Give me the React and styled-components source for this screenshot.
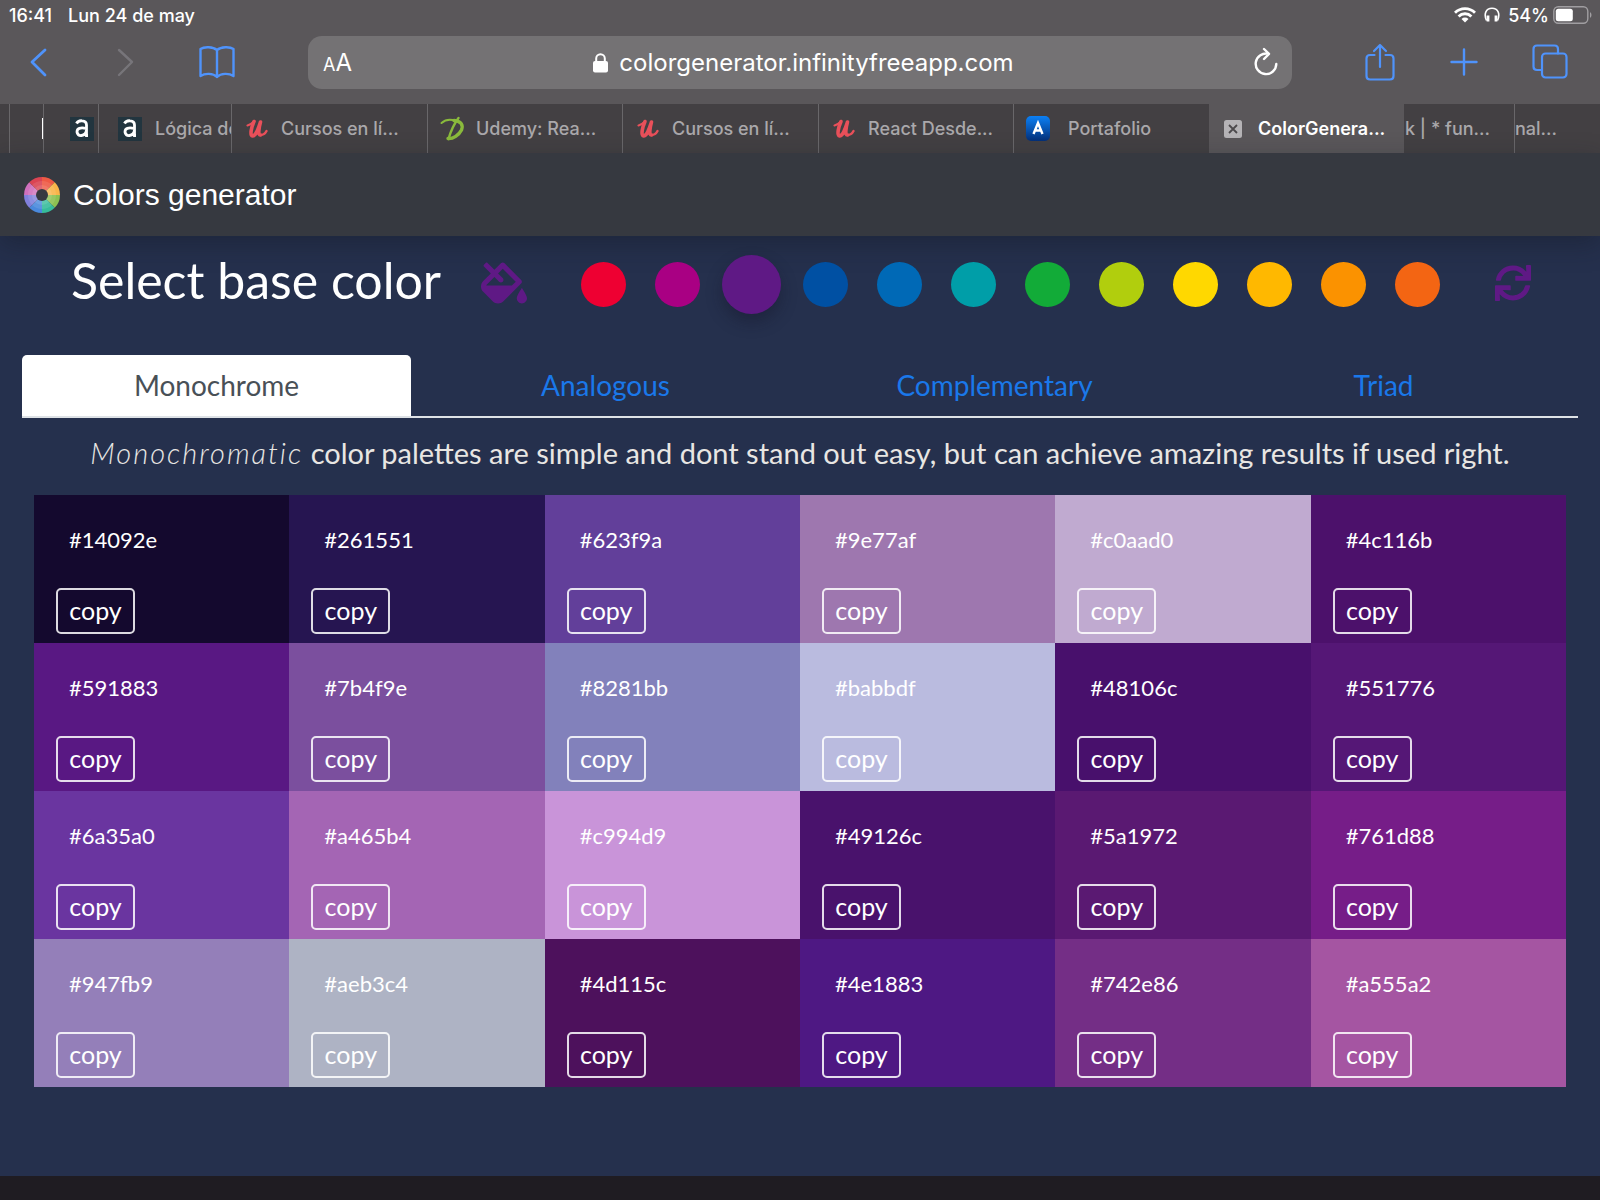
import React, { useState } from "react";
import styled, { createGlobalStyle, css } from "styled-components";
import { FaFillDrip, FaSync } from "react-icons/fa";

const GlobalStyle = createGlobalStyle`
  * { box-sizing: border-box; }
  body { margin: 0; background: #25304d; }
  button, input { font: inherit; }
`;

const uiFont = css`font-family: Inter, "Liberation Sans", sans-serif;`;
const pageFont = css`font-family: Lato, "Open Sans", sans-serif;`;

const Screen = styled.div`
  display: flex;
  flex-direction: column;
  min-height: 100vh;
`;

const Browser = styled.div`
  ${uiFont}
  background: #5a575a;
  color: #fff;
`;

const StatusBar = styled.div`
  display: flex;
  align-items: center;
  justify-content: space-between;
  height: 30px;
  padding: 0 8px 0 9px;
  font-size: 18px;
  font-weight: 500;
`;

const StatusGroup = styled.div`
  display: flex;
  align-items: center;
  gap: ${(p) => p.$gap}px;
`;

const Toolbar = styled.div`
  display: grid;
  grid-template-columns: 277px 1fr 277px;
  gap: 31px;
  height: 74px;
  padding-bottom: 10px;
  align-items: center;
`;

const ToolGroup = styled.div`
  display: flex;
  justify-content: space-between;
  align-items: center;
  padding: ${(p) => (p.$end ? "0 32px 0 42px" : "0 42px 0 22px")};
`;

const ToolButton = styled.button`
  display: flex;
  padding: 0;
  border: 0;
  background: none;
  color: ${(p) => (p.disabled ? "#77757a" : p.$light ? "#fff" : "#4f93fb")};
`;

const AddressBar = styled.div`
  display: flex;
  align-items: center;
  justify-content: space-between;
  height: 53px;
  padding: 0 13px 0 15px;
  border-radius: 14px;
  background: #747274;
`;

const TextSize = styled.button`
  display: flex;
  align-items: baseline;
  width: 31px;
  padding: 0;
  border: 0;
  background: none;
  color: #fff;
  font-size: 24px;
  small { font-size: 18px; }
`;

const Address = styled.a`
  display: flex;
  align-items: center;
  gap: 11px;
  color: #fff;
  font-size: 24px;
  text-decoration: none;
`;

const TabStrip = styled.nav`
  display: grid;
  grid-template-columns: 9fr 34fr 55fr 133fr 196fr 195fr 196fr 195fr 196fr 195fr 110fr 86fr;
  height: 49px;
  background: #434043;
`;

const BrowserTab = styled.a`
  display: flex;
  align-items: center;
  min-width: 0;
  overflow: hidden;
  gap: ${(p) => p.$gap || 13}px;
  padding-left: ${(p) => p.$pad || 0}px;
  border-left: 1px solid ${(p) => (p.$plain ? "transparent" : "#69676a")};
  background: ${(p) => (p.$active ? "#5a575a" : "transparent")};
  color: ${(p) => (p.$active ? "#fff" : "#aaa8ab")};
  font-size: 18px;
  font-weight: ${(p) => (p.$active ? 600 : 500)};
  white-space: nowrap;
  text-decoration: none;
  svg { flex: none; }
`;

const Caret = styled.span`
  width: 2px;
  height: 21px;
  background: #fff;
`;

const Header = styled.header`
  display: flex;
  align-items: center;
  gap: 13px;
  height: 83px;
  padding-left: 24px;
  background: #363940;
  box-shadow: 0 8px 24px rgba(20, 24, 36, 0.4);
  color: #fff;
  font-family: "Liberation Sans", Arial, sans-serif;
  font-size: 30px;
`;

const Main = styled.main`
  ${pageFont}
  flex: 1;
  padding: 0 22px 88px;
  color: #fff;
`;

const Picker = styled.section`
  display: flex;
  align-items: center;
  justify-content: space-between;
  height: 97px;
  margin-bottom: 22px;
  padding: 0 47px 0 49px;
  color: #5f1985;
`;

const PickerTitle = styled.h1`
  margin: 0;
  padding-bottom: 10px;
  color: #fff;
  font-size: 50px;
  font-weight: 400;
  line-height: 60px;
`;

const Swatches = styled.div`
  display: flex;
`;

const SwatchLabel = styled.label`
  display: grid;
  place-items: center;
  width: 74px;
  height: 60px;
`;

const Swatch = styled.input`
  appearance: none;
  width: 45px;
  height: 45px;
  margin: 0;
  border-radius: 50%;
  background: ${(p) => p.$color};
  &:checked {
    width: 59px;
    height: 59px;
    box-shadow: 0 8px 16px rgba(20, 20, 40, 0.4);
  }
`;

const IconButton = styled.button`
  display: flex;
  padding: 0 0 4px;
  border: 0;
  background: none;
  color: inherit;
`;

const SchemeTabs = styled.nav`
  display: grid;
  grid-template-columns: repeat(4, 1fr);
  border-bottom: 2px solid #dee2e6;
`;

const SchemeTab = styled.a`
  height: 61px;
  border-radius: 5px 5px 0 0;
  background: ${(p) => (p.$active ? "#fff" : "transparent")};
  color: ${(p) => (p.$active ? "#495057" : "#1a78ea")};
  font-size: 28px;
  line-height: 60px;
  text-align: center;
  text-decoration: none;
`;

const Description = styled.p`
  margin: 0;
  padding: 13px 0 21px;
  color: #e8e6e3;
  font-size: 29px;
  line-height: 43px;
  text-align: center;
  em {
    font-weight: 300;
    letter-spacing: 2px;
  }
`;

const Palette = styled.div`
  display: grid;
  grid-template-columns: repeat(6, 1fr);
  padding: 0 12px;
`;

const Cell = styled.div`
  display: flex;
  flex-direction: column;
  align-items: flex-start;
  height: 148px;
  padding: 29px 22px 9px;
  background: ${(p) => p.$color};
`;

const Hex = styled.span`
  flex: 1;
  padding-left: 13px;
  font-size: 22px;
  line-height: 32px;
`;

const CopyButton = styled.button`
  width: 79px;
  height: 46px;
  padding: 0 0 3px;
  border: 2px solid rgba(255, 255, 255, 0.85);
  border-radius: 5px;
  background: none;
  color: #fff;
  font-size: 25px;
  line-height: 32px;
`;

const BottomBar = styled.div`
  height: 24px;
  background: #1f1c22;
`;

const line = { fill: "none", stroke: "currentColor", strokeWidth: 2.4, strokeLinecap: "round", strokeLinejoin: "round" };

const BackIcon = () => (
  <svg width="34" height="34" viewBox="0 0 34 34" {...line} strokeWidth="2.8"><path d="M23 5 10 17 23 30" /></svg>
);
const ForwardIcon = () => (
  <svg width="34" height="34" viewBox="0 0 34 34" {...line}><path d="M8 5 21 17 8 30" /></svg>
);
const BookIcon = () => (
  <svg width="36" height="34" viewBox="0 0 36 34" {...line}>
    <path d="M18 5C14 1.500 5 1.500 1.500 4V31C6 28 14 28 18 32C22 28 30 28 34.500 31V4C31 1.500 22 1.500 18 5ZM18 5V32" />
  </svg>
);
const ShareIcon = () => (
  <svg width="30" height="38" viewBox="0 0 30 38" {...line} strokeWidth="2.200">
    <path d="M9.500 12H5Q1.500 12 1.500 15.500V33Q1.500 36.500 5 36.500H25Q28.500 36.500 28.500 33V15.500Q28.500 12 25 12H20.500M15 24V2M9 8 15 2 21 8" />
  </svg>
);
const PlusIcon = () => (
  <svg width="28" height="28" viewBox="0 0 28 28" {...line}><path d="M14 1.500V26.500M1.500 14H26.500" /></svg>
);
const TabsIcon = () => (
  <svg width="36" height="36" viewBox="0 0 36 36" {...line} strokeWidth="2.200">
    <path d="M9.500 26H5Q1.500 26 1.500 22.500V5Q1.500 1.500 5 1.500H22.500Q26 1.500 26 5V9.500" />
    <rect x="10" y="9.500" width="24.500" height="24" rx="3.500" />
  </svg>
);
const ReloadIcon = () => (
  <svg width="26" height="30" viewBox="0 0 26 30" {...line}>
    <path d="M15.500 6.800A10.300 10.300 0 1 0 23.300 17M11 2 16 6.800 11 12" />
  </svg>
);
const LockIcon = () => (
  <svg width="15" height="21" viewBox="0 0 15 21">
    <path d="M3.200 10V6.500a4.300 4.300 0 0 1 8.600 0V10" fill="none" stroke="currentColor" strokeWidth="2" />
    <rect y="9" width="15" height="11.500" rx="2" fill="currentColor" />
  </svg>
);
const WifiIcon = () => (
  <svg width="22" height="16" viewBox="0 0 22 16" fill="none" stroke="#fff" strokeWidth="2.800">
    <path d="M1 5.800A14.200 14.200 0 0 1 21 5.800M4.600 9.400A9 9 0 0 1 17.400 9.400" />
    <path d="M11 15.500 7.500 12A5 5 0 0 1 14.500 12Z" fill="#fff" stroke="none" />
  </svg>
);
const HeadphonesIcon = () => (
  <svg width="16" height="16" viewBox="0 0 16 16" fill="none" stroke="#fff">
    <path d="M2.500 13.500C-.5 7 2 1.200 8 1.200S16.500 7 13.500 13.500" strokeWidth="1.600" />
    <path d="M4 8.500V14.500M12 8.500V14.500" strokeWidth="2.800" />
  </svg>
);
const BatteryIcon = () => (
  <svg width="39" height="18" viewBox="0 0 39 18">
    <rect x=".8" y=".8" width="34" height="16.400" rx="4.500" fill="none" stroke="#a09ea1" strokeWidth="1.400" />
    <rect x="2.800" y="2.800" width="17" height="12.400" rx="2.500" fill="#fff" />
    <path d="M37 6v6q1.500-1 1.500-3T37 6Z" fill="#a09ea1" />
  </svg>
);
const AlgorithmIcon = () => (
  <svg width="24" height="24" viewBox="0 0 24 24">
    <rect width="24" height="24" fill="#22353f" />
    <path d="M6.500 6.500Q8 3.500 12 3.800Q16.500 4 16.500 8V18.500H18M16.500 11.500Q7 9.500 7 15Q7.500 19 11.500 18.500Q16 18 16.500 13" fill="none" stroke="#fff" strokeWidth="2.800" />
  </svg>
);
const UdemyIcon = () => (
  <svg width="22" height="20" viewBox="0 0 22 20" fill="none" stroke="#e9505a" strokeLinecap="round" strokeLinejoin="round">
    <path d="M1.500 6.500Q5 5.500 8 2.500" strokeWidth="2.200" />
    <path d="M8 2.500C5.500 8 3.500 16.500 6.500 17C10 17 12.500 9 14.500 3C12.500 10 12 16.500 14.500 16" strokeWidth="3.600" />
    <path d="M14.500 16Q18.500 16 20.500 12" strokeWidth="2.400" />
  </svg>
);
const DownloadIcon = () => (
  <svg width="25" height="26" viewBox="0 0 25 26" fill="none" stroke="#8aba3c" strokeLinecap="round">
    <path d="M1.500 7C6 3 12 3.500 16 5" strokeWidth="2" />
    <path d="M14 4.500C21 5 23.500 9 21.500 14C19 19 13 23 8 22.500" strokeWidth="3.400" />
    <path d="M18.500 2C14 8 10.500 16 8.500 23" strokeWidth="2.400" />
  </svg>
);
const PortfolioIcon = () => (
  <svg width="24" height="25" viewBox="0 0 24 25">
    <defs>
      <linearGradient id="portfolio" x1="0" y1="0" x2="0" y2="1">
        <stop offset="0" stopColor="#0b80f5" /><stop offset="1" stopColor="#042f78" />
      </linearGradient>
    </defs>
    <rect width="24" height="25" rx="5" fill="url(#portfolio)" />
    <path d="M7.500 18 12 7 16.500 18M9 14.500H15" fill="none" stroke="#fff" strokeWidth="2.400" />
  </svg>
);
const CloseIcon = () => (
  <svg width="18" height="18" viewBox="0 0 18 18">
    <rect width="18" height="18" rx="2.500" fill="#b5b3b6" />
    <path d="M5 5 13 13M13 5 5 13" stroke="#4c494c" strokeWidth="1.800" />
  </svg>
);

const wheel = ["#ee5a45", "#f9b54a", "#8cc152", "#37bc9b", "#4a89dc", "#8180dc", "#d070bd", "#da4453"];
const point = (r, a) => `${18 + r * Math.sin(a)} ${18 - r * Math.cos(a)}`;
const wedge = (i, r) => {
  const a = (i * Math.PI) / 4;
  const b = a + Math.PI / 4;
  return `M18 18L${point(r, a)}A${r} ${r} 0 0 1 ${point(r, b)}Z`;
};
const WheelLogo = () => (
  <svg width="36" height="36" viewBox="0 0 36 36">
    {wheel.map((c, i) => <path key={c} d={wedge(i, 18)} fill={c} />)}
    <circle cx="18" cy="18" r="14" fill="#fff" fillOpacity=".1" />
    <circle cx="18" cy="18" r="10" fill="#fff" fillOpacity=".1" />
    <circle cx="18" cy="18" r="6" fill="#363940" />
  </svg>
);

const bases = [
  ["Red", "#ee0032"], ["Magenta", "#a90083"], ["Purple", "#5f1985"], ["Navy", "#0050a3"],
  ["Blue", "#0069b6"], ["Teal", "#009ea8"], ["Green", "#12ab38"], ["Lime", "#b1ce0d"],
  ["Yellow", "#ffd800"], ["Amber", "#ffb800"], ["Orange", "#fb9200"], ["Vermilion", "#f36513"],
];

const palette = [
  "#14092e", "#261551", "#623f9a", "#9e77af", "#c0aad0", "#4c116b",
  "#591883", "#7b4f9e", "#8281bb", "#babbdf", "#48106c", "#551776",
  "#6a35a0", "#a465b4", "#c994d9", "#49126c", "#5a1972", "#761d88",
  "#947fb9", "#aeb3c4", "#4d115c", "#4e1883", "#742e86", "#a555a2",
];

const schemes = ["Monochrome", "Analogous", "Complementary", "Triad"];

export default function App() {
  const [base, setBase] = useState("Purple");
  return (
    <Screen>
      <GlobalStyle />
      <Browser>
        <StatusBar>
          <StatusGroup $gap={16}><span>16:41</span><span>Lun 24 de may</span></StatusGroup>
          <StatusGroup $gap={8}>
            <WifiIcon /><HeadphonesIcon />
            <StatusGroup $gap={4}><span>54%</span><BatteryIcon /></StatusGroup>
          </StatusGroup>
        </StatusBar>
        <Toolbar>
          <ToolGroup>
            <ToolButton aria-label="Back"><BackIcon /></ToolButton>
            <ToolButton aria-label="Forward" disabled><ForwardIcon /></ToolButton>
            <ToolButton aria-label="Bookmarks"><BookIcon /></ToolButton>
          </ToolGroup>
          <AddressBar>
            <TextSize aria-label="Text size"><small>A</small>A</TextSize>
            <Address href="#"><LockIcon />colorgenerator.infinityfreeapp.com</Address>
            <ToolButton aria-label="Reload" $light><ReloadIcon /></ToolButton>
          </AddressBar>
          <ToolGroup $end>
            <ToolButton aria-label="Share"><ShareIcon /></ToolButton>
            <ToolButton aria-label="New tab"><PlusIcon /></ToolButton>
            <ToolButton aria-label="All tabs"><TabsIcon /></ToolButton>
          </ToolGroup>
        </Toolbar>
        <TabStrip>
          <BrowserTab href="#" $plain aria-label="Tab" />
          <BrowserTab href="#" $pad={32} aria-label="Tab"><Caret /></BrowserTab>
          <BrowserTab href="#" $pad={26} aria-label="Tab"><AlgorithmIcon /></BrowserTab>
          <BrowserTab href="#" $pad={19}><AlgorithmIcon />Lógica de</BrowserTab>
          <BrowserTab href="#" $pad={14}><UdemyIcon />Cursos en lí...</BrowserTab>
          <BrowserTab href="#" $pad={12} $gap={11}><DownloadIcon />Udemy: Rea...</BrowserTab>
          <BrowserTab href="#" $pad={14}><UdemyIcon />Cursos en lí...</BrowserTab>
          <BrowserTab href="#" $pad={14}><UdemyIcon />React Desde...</BrowserTab>
          <BrowserTab href="#" $pad={12} $gap={18}><PortfolioIcon />Portafolio</BrowserTab>
          <BrowserTab href="#" $pad={14} $gap={16} $active $plain><CloseIcon />ColorGenera...</BrowserTab>
          <BrowserTab href="#" $plain>k | * fun...</BrowserTab>
          <BrowserTab href="#">nal...</BrowserTab>
        </TabStrip>
      </Browser>
      <Header><WheelLogo />Colors generator</Header>
      <Main>
        <Picker>
          <PickerTitle>Select base color</PickerTitle>
          <IconButton aria-label="Fill"><FaFillDrip size={46} /></IconButton>
          <Swatches>
            {bases.map(([name, color]) => (
              <SwatchLabel key={name}>
                <Swatch type="radio" name="base" aria-label={name} $color={color} checked={base === name} onChange={() => setBase(name)} />
              </SwatchLabel>
            ))}
          </Swatches>
          <IconButton aria-label="Refresh"><FaSync size={36} /></IconButton>
        </Picker>
        <SchemeTabs>
          {schemes.map((s, i) => <SchemeTab key={s} href="#" $active={i === 0}>{s}</SchemeTab>)}
        </SchemeTabs>
        <Description>
          <em>Monochromatic</em> color palettes are simple and dont stand out easy, but can achieve amazing results if used right.
        </Description>
        <Palette>
          {palette.map((c) => (
            <Cell key={c} $color={c}><Hex>{c}</Hex><CopyButton>copy</CopyButton></Cell>
          ))}
        </Palette>
      </Main>
      <BottomBar />
    </Screen>
  );
}
